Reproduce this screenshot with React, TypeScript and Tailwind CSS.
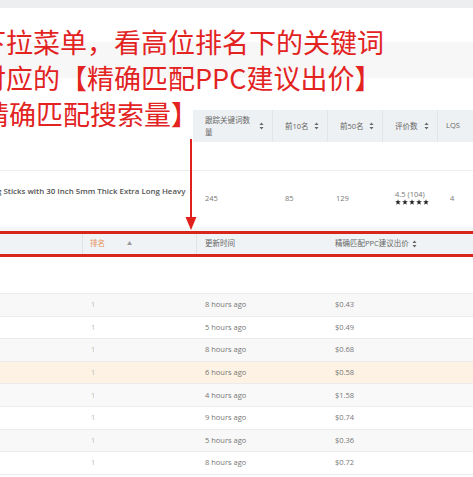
const rows = [
  { time: "8 hours ago", price: "$0.43", bg: "bg-[#f8f8f8]" },
  { time: "5 hours ago", price: "$0.49", bg: "bg-white" },
  { time: "8 hours ago", price: "$0.68", bg: "bg-[#f8f8f8]" },
  { time: "6 hours ago", price: "$0.58", bg: "bg-[#fdf2e3]" },
  { time: "4 hours ago", price: "$1.58", bg: "bg-[#f9f9f9]" },
  { time: "9 hours ago", price: "$0.74", bg: "bg-white" },
  { time: "5 hours ago", price: "$0.36", bg: "bg-[#f8f8f8]" },
  { time: "8 hours ago", price: "$0.72", bg: "bg-white" },
];

function SortIcon() {
  return (
    <svg width="5" height="8" viewBox="0 0 5 8" className="shrink-0">
      <path d="M2.5 0.5 L4.5 3 H0.5 Z M2.5 7.5 L4.5 5 H0.5 Z" fill="#666" />
    </svg>
  );
}

function HeaderCell({ label, width }: { label: React.ReactNode; width: string }) {
  return (
    <div className={`${width} flex items-center justify-between border-r border-[#e3e6e8] pl-3 pr-2`}>
      <span className="leading-[12px]">{label}</span>
      <SortIcon />
    </div>
  );
}

function Stars() {
  return (
    <div className="flex gap-[1px]">
      {[0, 1, 2, 3, 4].map((i) => (
        <svg key={i} width="6" height="6" viewBox="0 0 10 10">
          <path d="M5 0.3 L6.2 3.7 L9.8 3.8 L7 6 L8 9.6 L5 7.5 L2 9.6 L3 6 L0.2 3.8 L3.8 3.7 Z" fill="#222" />
        </svg>
      ))}
    </div>
  );
}

export default function App() {
  const cjk = "font-['Noto_Sans_CJK_SC',sans-serif]";
  return (
    <div className="relative h-[477px] w-[473px] overflow-hidden bg-white font-['Open_Sans','Noto_Sans_CJK_SC',sans-serif] text-[7.5px] text-[#777]">
      <div className="h-[8px] bg-[#eceef0]" />
      <div className="h-[34px] bg-white" />
      <div className="h-[36px] bg-[#f7f7f7]" />
      <div className="h-[32px] bg-white" />

      {/* top table header */}
      <div className="flex h-[32px]">
        <div className="w-[193px] bg-white" />
        <div className="flex flex-1 bg-[#eef1f3] text-[#666]">
          <HeaderCell label={<>跟踪关键词数<br />量</>} width="w-[80px]" />
          <HeaderCell label="前10名" width="w-[55px]" />
          <HeaderCell label="前50名" width="w-[55px]" />
          <HeaderCell label="评价数" width="w-[55px]" />
          <div className="flex items-center pl-2">LQS</div>
        </div>
      </div>
      <div className="h-[29px] border-b border-[#eee] bg-white" />

      {/* product row */}
      <div className="flex h-[56px] items-center bg-white">
        <div className="h-full w-[193px] overflow-hidden whitespace-nowrap pt-[15px]">
          <div className="-ml-[3px] text-[7.9px] font-semibold text-[#555]">
            g Sticks with 30 Inch 5mm Thick Extra Long Heavy
          </div>
        </div>
        <div className="w-[80px] pl-3">245</div>
        <div className="w-[55px] pl-3">85</div>
        <div className="w-[55px] pl-2">129</div>
        <div className="w-[55px] pl-3">
          <div className="-mt-[4px] leading-[10px]">4.5 (104)</div>
          <Stars />
        </div>
        <div className="pl-3">4</div>
      </div>
      <div className="h-[4px] bg-[#f4f7f9]" />

      {/* highlighted header */}
      <div className="flex h-[26px] items-center border-y-[3px] border-[#d9261c] bg-[#eff3f5] text-[#666]">
        <div className="h-full w-[83px] border-r border-[#e0e3e5]" />
        <div className="flex h-full w-[114px] items-center border-r border-[#e0e3e5] pl-[7px] text-[#e8915a]">
          <span>排名</span>
          <span className="ml-[22px] text-[5px] text-[#999]">▲</span>
        </div>
        <div className="w-[130px] pl-[8px]">更新时间</div>
        <div className="flex items-center gap-[3px] pl-[8px]">
          <span>精确匹配PPC建议出价</span>
          <SortIcon />
        </div>
      </div>

      <div className="h-[37px] border-b border-[#ececec] bg-white" />

      {rows.map((r, i) => (
        <div key={i} className={`flex h-[22.6px] items-center border-b border-[#ececec] ${r.bg}`}>
          <div className="w-[83px]" />
          <div className="w-[114px] pl-[8px] text-[#bbb]">1</div>
          <div className="w-[130px] pl-[8px]">{r.time}</div>
          <div className="pl-[8px]">{r.price}</div>
        </div>
      ))}

      {/* annotation overlay */}
      <div className={`absolute left-0 top-[24px] ${cjk} text-[27px] font-normal leading-[36px] text-[#e2231f]`}>
        <div className="-ml-[21px] whitespace-nowrap">下拉菜单，看高位排名下的关键词</div>
        <div className="-ml-[21px] whitespace-nowrap">对应的【精确匹配PPC建议出价】</div>
        <div className="-ml-[45px] whitespace-nowrap">【精确匹配搜索量】</div>
      </div>

      {/* arrow */}
      <svg className="absolute left-[185px] top-[139px]" width="12" height="92" viewBox="0 0 12 92">
        <rect x="5" y="0" width="2" height="80" fill="#e0201c" />
        <path d="M0.5 78 L11.5 78 L6 91 Z" fill="#e0201c" />
      </svg>
    </div>
  );
}
